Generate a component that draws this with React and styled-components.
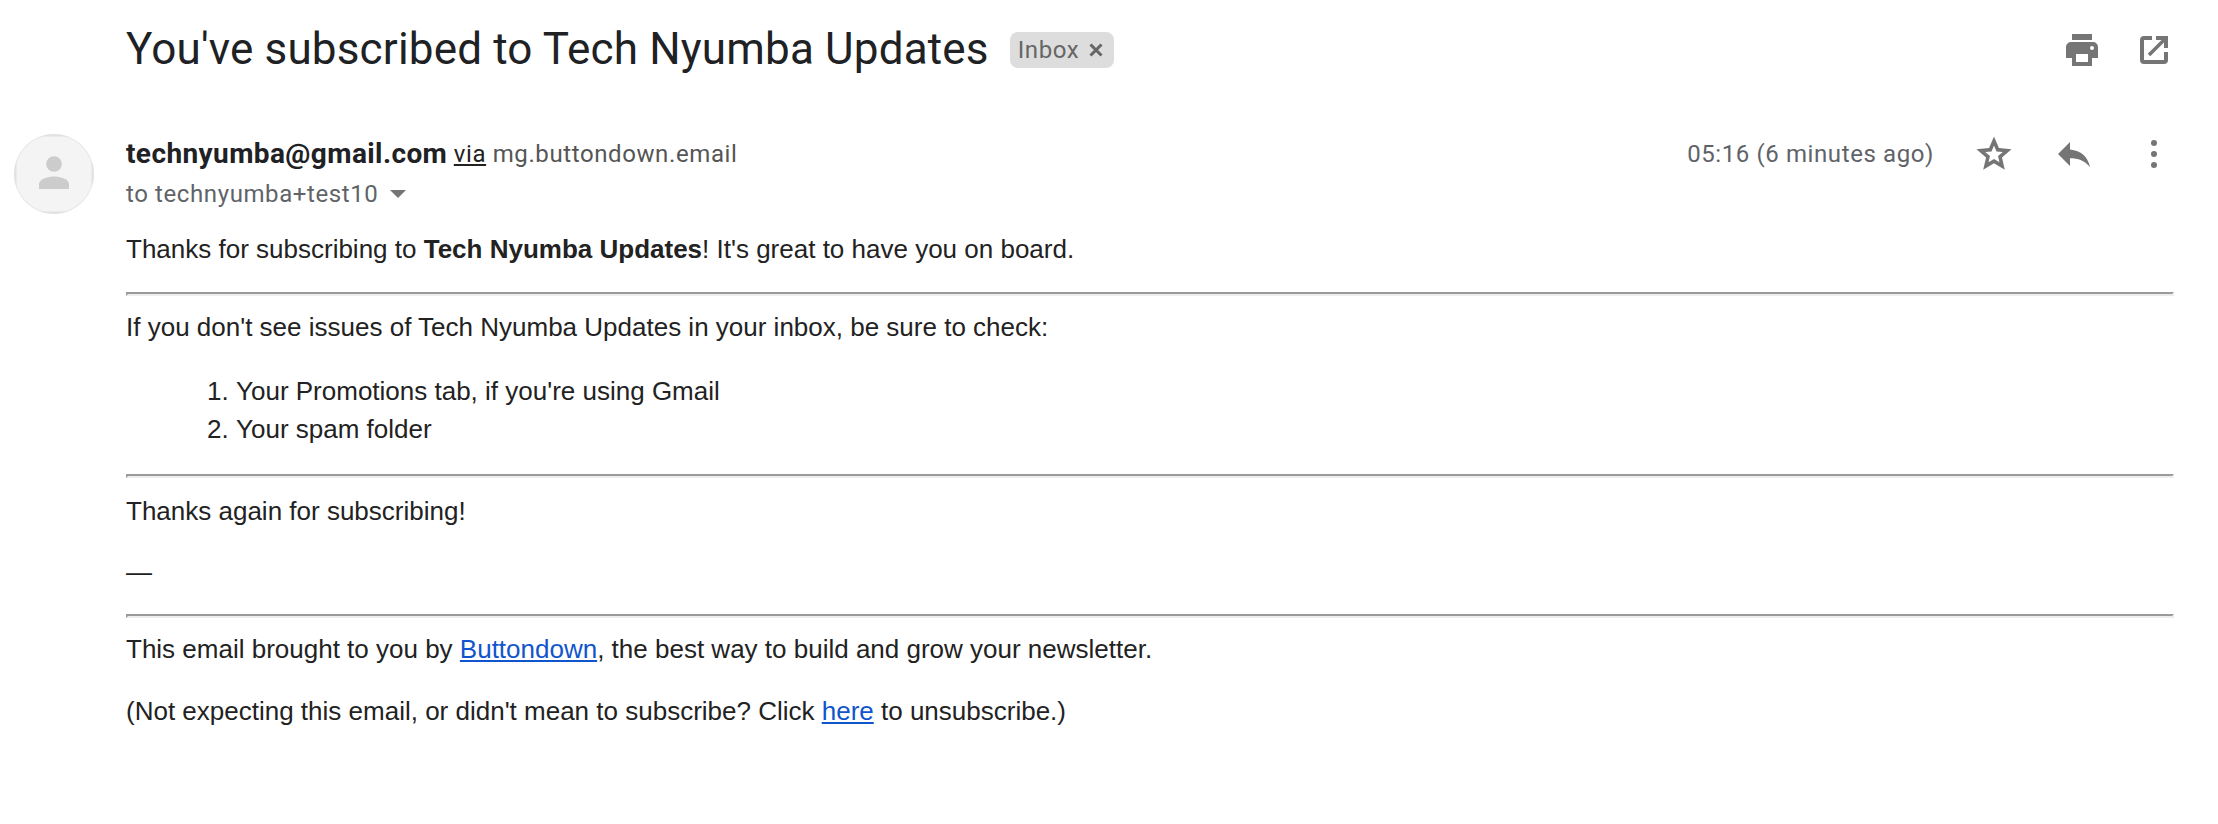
import React from 'react';
import styled, { createGlobalStyle } from 'styled-components';

const GlobalStyle = createGlobalStyle`
  *, *::before, *::after { box-sizing: border-box; }
  body { margin: 0; background: #fff; color: #202124; font-family: Roboto, sans-serif; }
  svg { display: block; flex: none; }
`;

const Page = styled.main`
  min-height: 824px;
  padding: 21px 44px 0 0;
`;

const SubjectRow = styled.header`
  display: flex;
  align-items: center;
  height: 56px;
  padding-left: 126px;
`;

const Subject = styled.h1`
  margin: 0;
  font-size: 44px;
  line-height: 56px;
  font-weight: 400;
  letter-spacing: 0.17px;
  white-space: nowrap;
`;

const LabelChip = styled.span`
  display: flex;
  align-items: center;
  gap: 10px;
  width: 104px;
  height: 36px;
  margin: 2px 0 0 21px;
  padding-left: 8px;
  border-radius: 8px;
  background: #ddd;
  color: #666;
  font-size: 24px;
  line-height: 36px;
  letter-spacing: 0.6px;
`;

const SubjectActions = styled.div`
  display: flex;
  align-items: center;
  gap: 42px;
  margin: 2px 6px 0 auto;
  color: #757575;
`;

const Message = styled.article`
  display: flex;
  padding-top: 57px;
`;

const AvatarColumn = styled.div`
  flex: none;
  width: 126px;
  padding-left: 14px;
`;

const Avatar = styled.div`
  width: 80px;
  height: 80px;
  border-radius: 50%;
  overflow: hidden;
  background: #f4f4f4;
  box-shadow: inset 0 0 0 1px #e8e8e8;
`;

const Content = styled.div`
  flex: 1;
  min-width: 0;
`;

const SenderRow = styled.div`
  display: flex;
  align-items: center;
  height: 40px;
`;

const Sender = styled.div`
  color: #555;
  font-size: 24px;
  line-height: 40px;
  letter-spacing: 0.6px;
  white-space: nowrap;
`;

const SenderName = styled.strong`
  color: #202124;
  font-size: 28px;
  letter-spacing: 0.4px;
  vertical-align: -1px;
`;

const Via = styled.span`
  color: #222;
  text-decoration: underline;
  text-decoration-thickness: 2px;
  text-underline-offset: 2px;
`;

const MessageActions = styled.div`
  display: flex;
  align-items: center;
  margin: 0 17px 0 auto;
  color: #757575;
`;

const Time = styled.time`
  margin-right: 39px;
  color: #5f6368;
  font-size: 24px;
  line-height: 40px;
  letter-spacing: 0.6px;
`;

const StarIcon = styled.svg`
  margin-right: 43px;
`;

const ReplyIcon = styled.svg`
  margin: 2px 61px 0 0;
`;

const Recipient = styled.div`
  display: flex;
  align-items: center;
  gap: 12px;
  height: 40px;
  color: #5f6368;
  font-size: 24px;
  line-height: 40px;
  letter-spacing: 0.6px;
`;

const Body = styled.div`
  padding-top: 16px;
  color: #222;
  font-family: "Liberation Sans", Arial, sans-serif;
  font-size: 26px;
  line-height: 38px;
`;

const Paragraph = styled.p`
  margin: 0 0 ${({ $after = 24 }) => $after}px;
`;

const Divider = styled.hr`
  height: 4px;
  margin: 0 0 ${({ $after }) => $after}px;
  border: 2px solid;
  border-color: #9a9a9a #eee #eee #9a9a9a;
`;

const Checklist = styled.ol`
  margin: 0 0 26px;
  padding-left: 110px;
`;

const Link = styled.a`
  color: #15c;
  text-decoration: underline;
  text-decoration-thickness: 2px;
  text-underline-offset: 2px;
`;

const PrintIcon = () => (
  <svg width="32" height="32" viewBox="0 0 32 32" fill="currentColor">
    <path d="M6 0h20v6H6z" />
    <path
      fillRule="evenodd"
      d="M5 8h22a5 5 0 0 1 5 5v11h-6v8H6v-8H0V13a5 5 0 0 1 5-5zM10 20v8h12v-8zM26 12a2 2 0 1 0 0 4 2 2 0 0 0 0-4z"
    />
  </svg>
);

const OpenIcon = () => (
  <svg width="28" height="28" viewBox="0 0 28 28" fill="none" stroke="currentColor" strokeWidth="4">
    <path d="M12 2H4a2 2 0 0 0-2 2v20a2 2 0 0 0 2 2h20a2 2 0 0 0 2-2v-8" />
    <path d="M16 2h10v10" />
    <path d="M25.5 2.5L9 19" strokeWidth="3.6" />
  </svg>
);

export default function App() {
  return (
    <Page>
      <GlobalStyle />
      <SubjectRow>
        <Subject>You've subscribed to Tech Nyumba Updates</Subject>
        <LabelChip>
          Inbox
          <svg width="14" height="14" viewBox="0 0 14 14" stroke="currentColor" strokeWidth="3">
            <path d="M1.5 1.5l11 11M12.5 1.5l-11 11" />
          </svg>
        </LabelChip>
        <SubjectActions>
          <PrintIcon />
          <OpenIcon />
        </SubjectActions>
      </SubjectRow>

      <Message>
        <AvatarColumn>
          <Avatar>
            <svg width="80" height="80" viewBox="0 0 80 80">
              <rect x="1.25" y="1.25" width="77.5" height="77.5" fill="none" stroke="#e2e2e2" strokeWidth="2.5" />
              <circle cx="40" cy="30" r="7.8" fill="#ccc" />
              <path d="M25 55v-5.2c0-5 10-7.4 15-7.4s15 2.4 15 7.4V55z" fill="#ccc" />
            </svg>
          </Avatar>
        </AvatarColumn>
        <Content>
          <SenderRow>
            <Sender>
              <SenderName>technyumba@gmail.com</SenderName> <Via>via</Via> mg.buttondown.email
            </Sender>
            <MessageActions>
              <Time>05:16 (6 minutes ago)</Time>
              <StarIcon width="42" height="42" viewBox="0 0 24 24" fill="currentColor">
                <path
                  fillRule="evenodd"
                  d="M22 9.24l-7.19-.62L12 2 9.19 8.63 2 9.24l5.46 4.73L5.82 21 12 17.27 18.18 21l-1.63-7.03zM12 14.87l-3.12 1.89.83-3.56-2.76-2.39 3.64-.31L12 7.15l1.42 3.35 3.63.32-2.75 2.39.83 3.55z"
                />
              </StarIcon>
              <ReplyIcon width="32" height="26" viewBox="0 0 32 26" fill="currentColor">
                <path d="M12 0L0 12l12 12v-7.7c8 0 15 2.2 20 9C30 14.5 23 8.6 12 7.4z" />
              </ReplyIcon>
              <svg width="6" height="28" viewBox="0 0 6 28" fill="currentColor">
                <circle cx="3" cy="3" r="3" />
                <circle cx="3" cy="14" r="3" />
                <circle cx="3" cy="25" r="3" />
              </svg>
            </MessageActions>
          </SenderRow>
          <Recipient>
            to technyumba+test10
            <svg width="16" height="8" viewBox="0 0 16 8" fill="#757575">
              <path d="M0 0h16L8 8z" />
            </svg>
          </Recipient>
          <Body>
            <Paragraph>
              Thanks for subscribing to <strong>Tech Nyumba Updates</strong>! It's great to have you on board.
            </Paragraph>
            <Divider $after={12} />
            <Paragraph $after={26}>
              If you don't see issues of Tech Nyumba Updates in your inbox, be sure to check:
            </Paragraph>
            <Checklist>
              <li>Your Promotions tab, if you're using Gmail</li>
              <li>Your spam folder</li>
            </Checklist>
            <Divider $after={14} />
            <Paragraph $after={23}>Thanks again for subscribing!</Paragraph>
            <Paragraph $after={23}>—</Paragraph>
            <Divider $after={12} />
            <Paragraph>
              This email brought to you by <Link>Buttondown</Link>, the best way to build and grow your newsletter.
            </Paragraph>
            <Paragraph>
              (Not expecting this email, or didn't mean to subscribe? Click <Link>here</Link> to unsubscribe.)
            </Paragraph>
          </Body>
        </Content>
      </Message>
    </Page>
  );
}
